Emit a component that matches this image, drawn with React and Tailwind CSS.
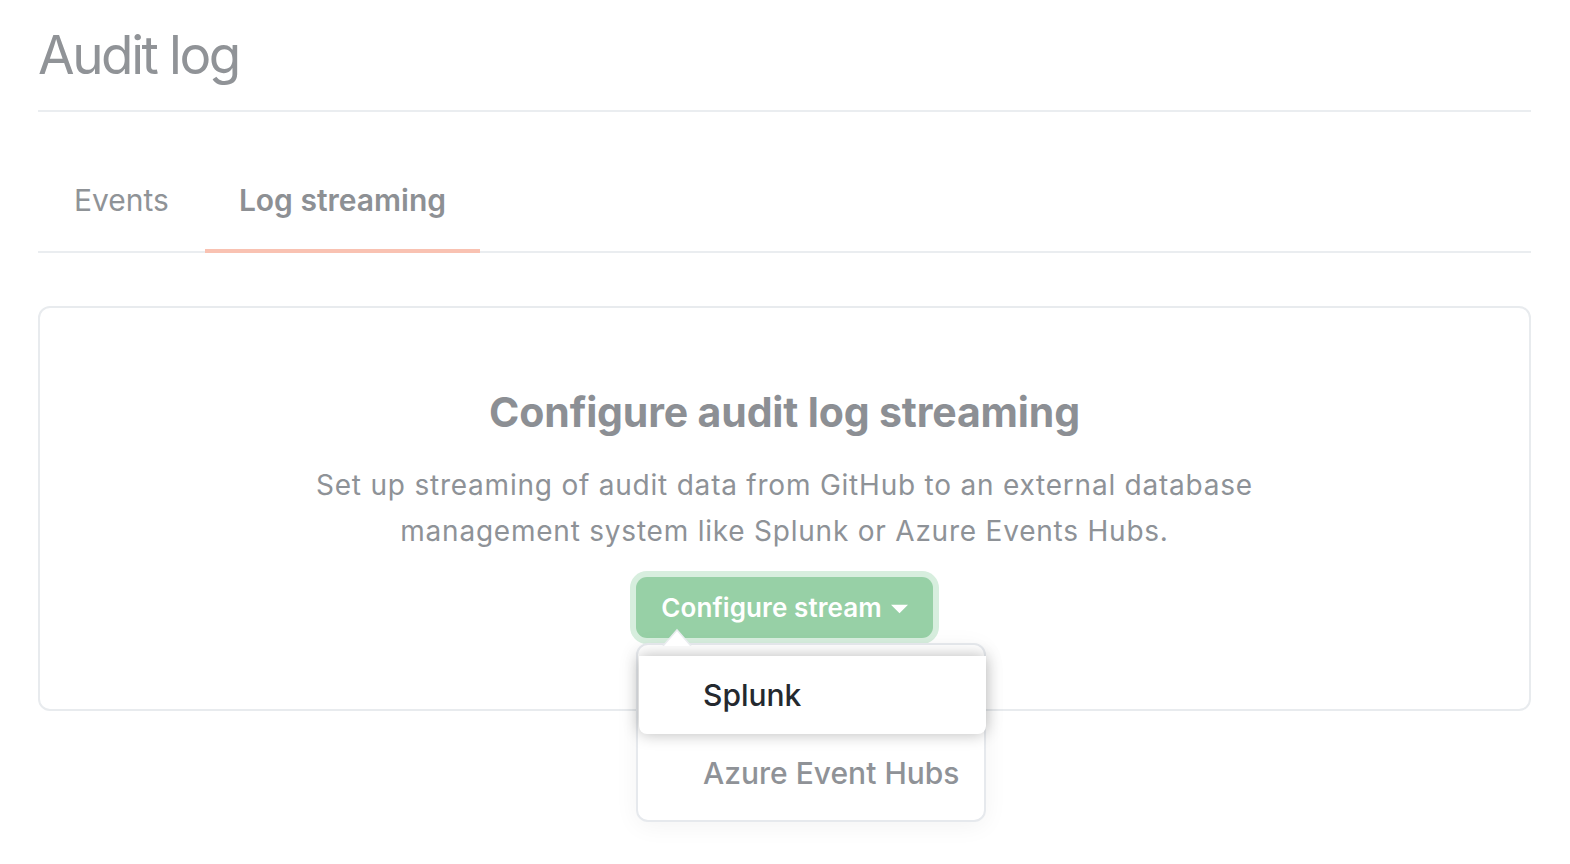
import { useState } from "react";

function Caret({ className }) {
  return (
    <svg viewBox="0 0 16 10" className={className} fill="currentColor">
      <path d="M0 1.5 L16 1.5 L8 9.5 Z" />
    </svg>
  );
}

export default function App() {
  const [tab] = useState("streaming");
  return (
    <div
      className="min-h-screen bg-white pl-[38px] pt-[20px] pr-[39px]"
      style={{ fontFamily: "Inter, 'Noto Sans', sans-serif" }}
    >
      <h1 className="text-[53px] leading-[70px] font-normal text-[#909397] tracking-[-2.4px] pb-[20px] border-b-2 border-[#eaedf0]">
        Audit log
      </h1>

      <nav className="flex items-end mt-[68px] border-b-2 border-[#eaedf0]">
        <div className="pl-[36px] pr-[36px] pb-[31px] text-[30px] leading-[40px] text-[#8f9397]">
          Events
        </div>
        <div
          className={`px-[34px] pb-[29px] -mb-[2px] text-[30px] leading-[40px] font-semibold text-[#8d9094] ${
            tab === "streaming" ? "border-b-4 border-[#f9c2b2]" : ""
          }`}
        >
          Log streaming
        </div>
      </nav>

      <section className="mt-[53px] border-2 border-[#e8ebee] rounded-[12px] pt-[80px] pb-[71px] flex flex-col items-center text-center">
        <h2 className="text-[41px] leading-[48px] font-bold text-[#8c8f94] tracking-[-0.15px]">
          Configure audit log streaming
        </h2>
        <p className="mt-[26px] text-[28px] leading-[46px] text-[#8e9297] tracking-[0.78px] max-w-[1000px]">
          Set up streaming of audit data from GitHub to an external database
          <br />
          management system like Splunk or Azure Events Hubs.
        </p>

        <div className="relative mt-[23px]">
          <button className="w-[297px] h-[61px] flex items-center justify-center gap-[9px] rounded-[11px] bg-[#97d0a6] ring-[6px] ring-[#d7eede] text-white text-[26px] font-semibold tracking-[0.1px]">
            Configure stream
            <Caret className="w-[17px] h-[11px] mt-[1px]" />
          </button>

          <div className="absolute left-0 top-full mt-[5px] w-[350px] h-[179px] border-2 border-[#e6e9ed] rounded-[12px] bg-white shadow-[0_4px_24px_rgba(0,0,0,0.05)] text-left">
            <svg
              viewBox="0 0 30 18"
              className="absolute left-[24px] -top-[17px] w-[30px] h-[18px]"
            >
              <path d="M1 18 L15 2 L29 18" fill="#ffffff" stroke="#e9ecef" strokeWidth="1.5" />
            </svg>
            <div className="mt-[11px] ml-[1px] -mr-[2px] h-[78px] flex items-center pl-[64px] bg-white rounded-b-[8px] shadow-[0_0_16px_rgba(0,0,0,0.28)] text-[30px] font-medium text-[#24292f]">
              Splunk
            </div>
            <div className="h-[78px] flex items-center pl-[65px] text-[30px] font-medium text-[#8f9297]">
              Azure Event Hubs
            </div>
          </div>
        </div>
      </section>
    </div>
  );
}
